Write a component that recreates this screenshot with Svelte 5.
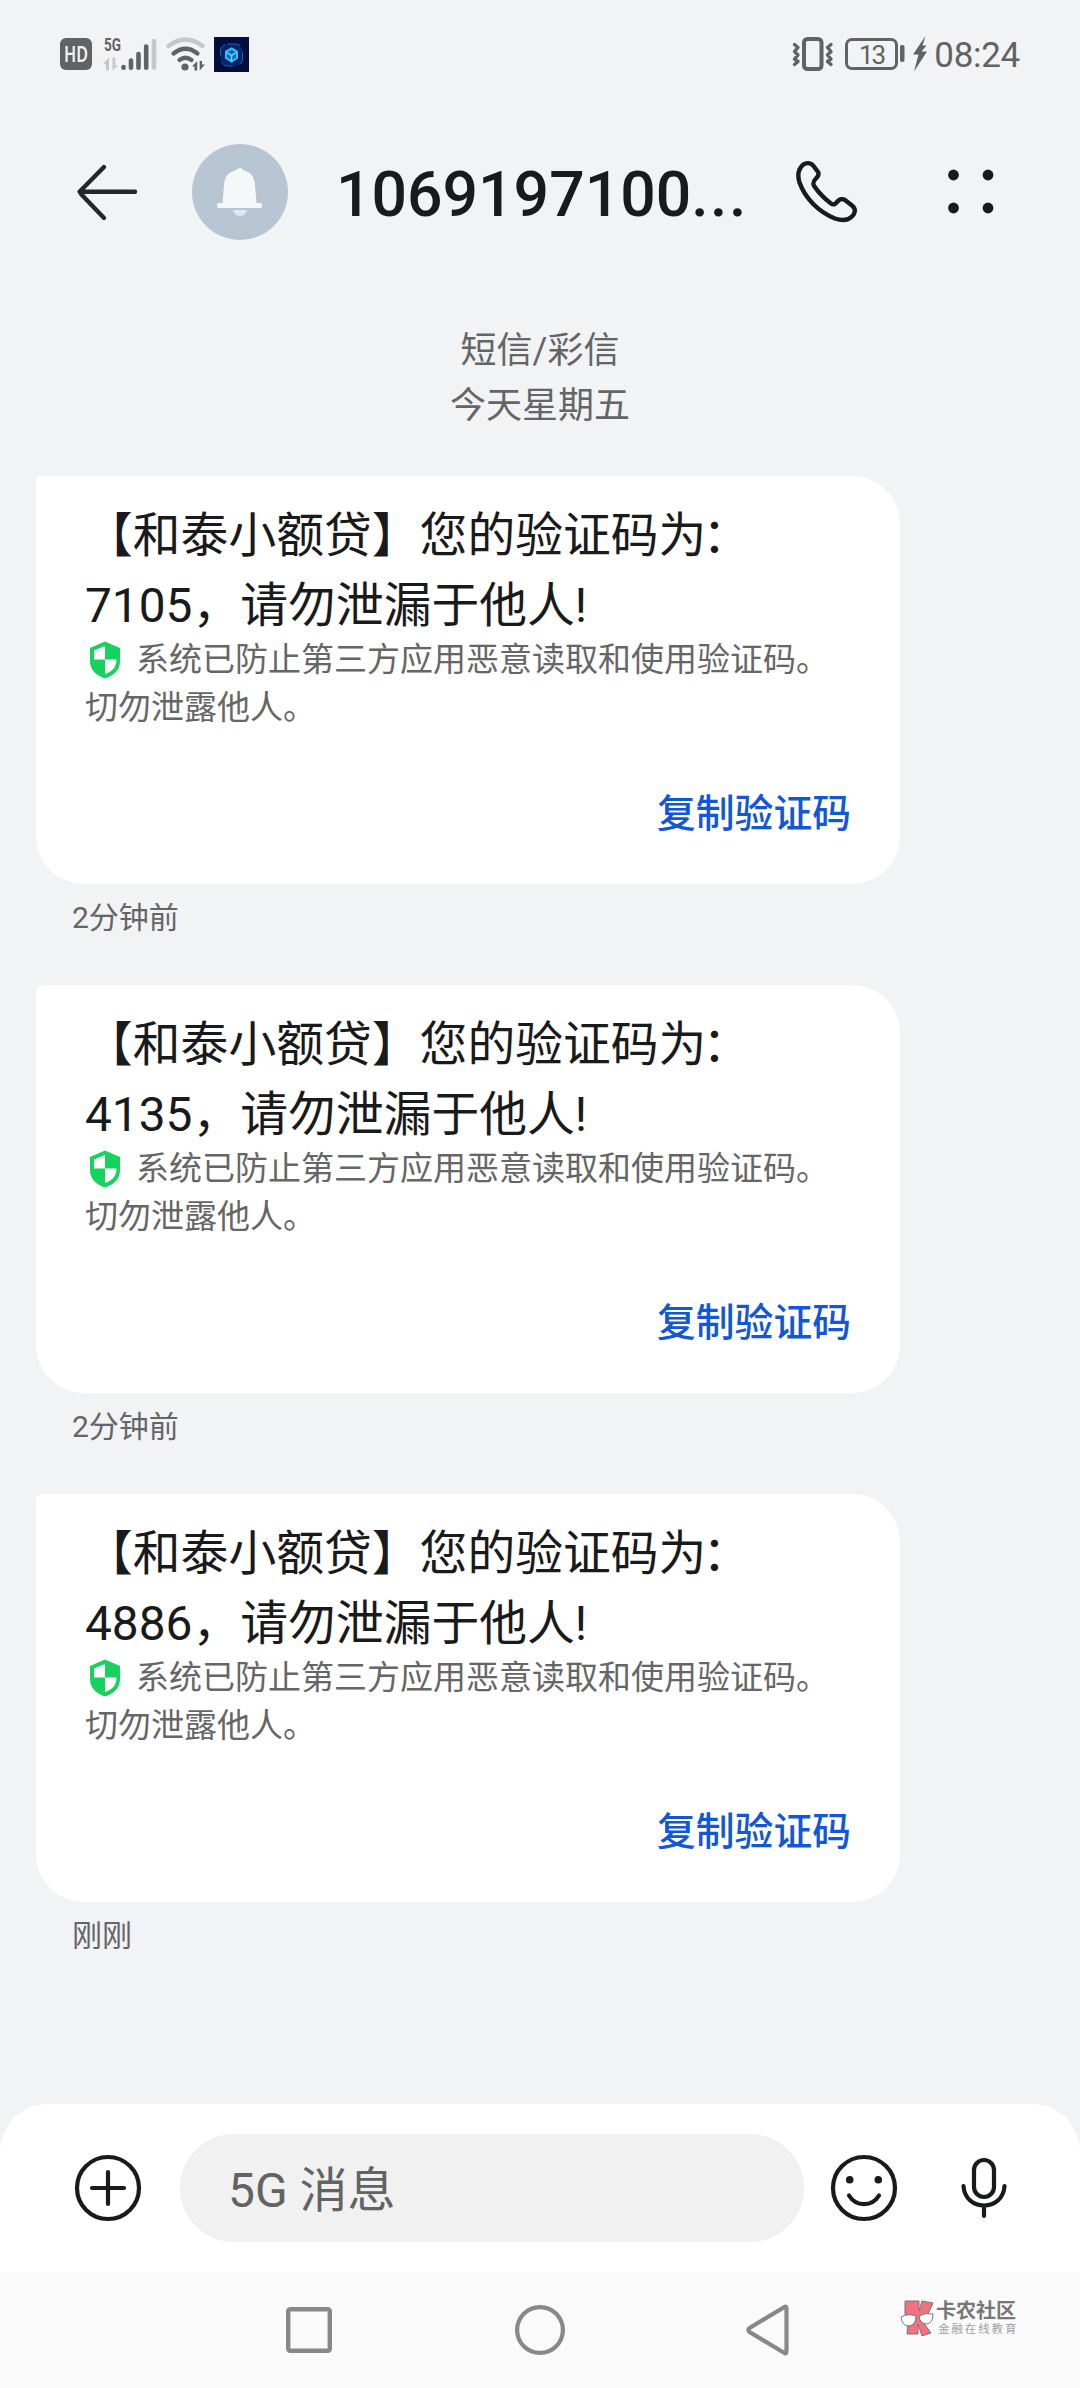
<script>
  const messages = [
    { code: '7105', time: '2分钟前' },
    { code: '4135', time: '2分钟前' },
    { code: '4886', time: '刚刚' },
  ];
</script>

<main class="screen">
  <div class="status">
    <svg class="hd" width="32" height="32" viewBox="0 0 32 32">
      <rect width="32" height="32" rx="6" fill="#616264" />
      <text x="4" y="23.5" textLength="24" lengthAdjust="spacingAndGlyphs" class="hd-text">HD</text>
    </svg>
    <svg class="signal" width="54" height="46" viewBox="0 -5 54 46">
      <text x="1" y="15" textLength="17" lengthAdjust="spacingAndGlyphs" class="net">5G</text>
      <path d="M0 28 6 21.500V34.500H3V28ZM9.500 21.500V34.500L15 29H12.200V21.500Z" fill="#c6c7c9" />
      <g stroke="#616264" stroke-width="4.600" stroke-linecap="round">
        <path d="M20.500 31V31.700M28 24.500V31.700M35.500 18V31.700M43.200 10.500V31.700" />
        <path d="M51 5V31.700" stroke="#c6c7c9" />
      </g>
    </svg>
    <svg class="wifi" width="40" height="36" viewBox="0 0 40 36">
      <g fill="none" stroke-width="4.200" stroke-linecap="round">
        <path d="M2.500 10Q19.500-3 36.500 10" stroke="#c6c7c9" />
        <path d="M7.500 17.500Q19.500 8 31.500 17.500M13.500 24Q19.500 19.500 25.500 24" stroke="#616264" />
      </g>
      <circle cx="19" cy="31" r="3.600" fill="#616264" />
      <path d="M26 30.500 31.200 25V34.500H28.500V30.500ZM33.700 25V34.500L39 28.500H36V25Z" fill="#616264" />
    </svg>
    <svg class="app" width="35" height="35" viewBox="0 0 35 35">
      <rect width="35" height="35" fill="#040d3c" />
      <rect x="6.500" y="7" width="22" height="22" rx="7" fill="#06246a" stroke="#1567a5" stroke-dasharray="13 7" />
      <path d="M17.500 11.500 23 14.500V21L17.500 24.500 12 21V14.500Z" fill="#0b65c8" stroke="#36bdf2" stroke-width="2" />
      <path d="m13 15.500 4.500 3 4.500-3M17.500 18.500V24" fill="none" stroke="#63e3fb" stroke-width="1.500" />
    </svg>
    <div class="grow"></div>
    <svg class="vibrate" width="42" height="34" viewBox="0 0 42 34">
      <rect x="12" y="2" width="17.500" height="30" rx="3.500" fill="none" stroke="#616264" stroke-width="4" />
      <path d="m2.500 7.500 3.500 3-3.500 4L6 18l-3.500 4L6 24.500l-3.500 3M39 7.500l-3.500 3 3.500 4-3.500 3.500 3.500 4-3.500 2.500 3.500 3" fill="none" stroke="#616264" stroke-width="3.400" stroke-linejoin="round" stroke-linecap="round" />
    </svg>
    <svg class="battery" width="60" height="32" viewBox="0 0 60 32">
      <rect x="1.500" y="1.500" width="50" height="29" rx="5.500" fill="none" stroke="#616264" stroke-width="3" />
      <rect x="55" y="7" width="4.500" height="17" rx="2" fill="#616264" />
      <text x="14" y="25.500" textLength="27" class="level">13</text>
    </svg>
    <svg class="bolt" width="14" height="36" viewBox="0 0 14 36">
      <path d="M12.500 0 0 18.500H5.500L1 35.500 14 15.500H8.500L13.500 9.500H9.500Z" fill="#616264" />
    </svg>
    <span class="clock">08:24</span>
  </div>

  <header>
    <svg class="back" width="64" height="60" viewBox="0 0 64 60" fill="none" stroke="#252627" stroke-width="4.400" stroke-linecap="round" stroke-linejoin="round">
      <path d="M28 5 3.500 29.800H59M5 32 28 56" />
    </svg>
    <div class="avatar">
      <svg width="96" height="96" viewBox="0 0 96 96">
        <path d="M48 24C50 24 51 26 53.500 27C60 29 62.500 34 63 41L64.500 59H68.500Q70 59 70 60.500V62.500Q70 64 68.500 64H26.500Q25 64 25 62.500V60.500Q25 59 26.500 59H30.500L32 41C32.500 34 35 29 42 27C44.500 26 46 24 48 24Z" fill="#f5f7f9" />
        <path d="M41 66H55Q53 72 48 72T41 66Z" fill="#dce8f4" />
      </svg>
    </div>
    <h1>1069197100<span class="dots">...</span></h1>
    <svg class="phone" width="64" height="64" viewBox="0 0 64 64">
      <path d="M6 7C9.500 2 15.500 2 18.500 6L23 12C24.500 14.500 23 16.500 21 18.500C18 21.500 17.500 23.500 19.500 26.500C24 33 30 39 36 43.500C38.500 45.500 40 44.500 42.500 41.500C44.500 39 47.500 38.500 50 40L57 45.500C61.500 49 60 53.500 57 56.500C53 60.500 47 61 40 58.500C23 51.500 10 38 4.500 22.500C2.500 16 3 11 6 7Z" fill="none" stroke="#191a1b" stroke-width="4.400" stroke-linejoin="round" />
    </svg>
    <svg class="more" width="48" height="48" viewBox="0 0 48 48" fill="#191a1b">
      <circle cx="6.500" cy="7" r="5.400" /><circle cx="41" cy="7" r="5.400" />
      <circle cx="6.500" cy="40" r="5.400" /><circle cx="41" cy="40" r="5.400" />
    </svg>
  </header>

  <section class="thread">
    <div class="intro">
      <div>短信/彩信</div>
      <div>今天星期五</div>
    </div>
    {#each messages as message}
      <article>
        <div class="card">
          <p class="body">【和泰小额贷】您的验证码为<span class="colon">：</span><br />{message.code}，请勿泄漏于他人!</p>
          <div class="notice">
            <div class="notice-line">
              <svg class="shield" width="32" height="38" viewBox="0 0 32 38">
                <path d="M16 .500 31 7V20C31 29 25 34.500 16 37.500C7 34.500 1 29 1 20V7Z" fill="#15d35c" />
                <path d="M16 5V18.500H5V9.500ZM16 18.500H27.500C27.500 26 23.500 30.500 16 33Z" fill="#fff" />
              </svg>
              <span>系统已防止第三方应用恶意读取和使用验证码。</span>
            </div>
            <div>切勿泄露他人。</div>
          </div>
          <div class="copy">复制验证码</div>
        </div>
        <div class="time">{message.time}</div>
      </article>
    {/each}
  </section>

  <footer class="composer">
    <svg class="plus" width="68" height="68" viewBox="0 0 68 68" fill="none" stroke="#191a1b" stroke-width="4.200" stroke-linecap="round">
      <circle cx="34" cy="34" r="31" />
      <path d="M18 34H50M34 18V50" />
    </svg>
    <div class="input">5G 消息</div>
    <svg class="smile" width="68" height="68" viewBox="0 0 68 68">
      <circle cx="34" cy="34" r="31" fill="none" stroke="#191a1b" stroke-width="4.200" />
      <circle cx="19.700" cy="25.700" r="3.800" fill="#191a1b" /><circle cx="48.300" cy="25.700" r="3.800" fill="#191a1b" />
      <path d="M19 41.500C26 53 42 53 49 41.500" fill="none" stroke="#191a1b" stroke-width="4.200" stroke-linecap="round" />
    </svg>
    <svg class="mic" width="48" height="62" viewBox="0 0 48 62" fill="none" stroke="#191a1b" stroke-width="4.200" stroke-linecap="round">
      <rect x="14" y="3" width="20" height="37" rx="10" />
      <path d="M3.500 29C5 55 43 55 44.500 29M24 50V59" />
    </svg>
  </footer>

  <nav>
    <svg class="recent" width="46" height="46" viewBox="0 0 46 46"><rect x="2.200" y="2.200" width="41.600" height="41.600" rx="2" fill="none" stroke="#888" stroke-width="4.400" /></svg>
    <svg class="home" width="50" height="50" viewBox="0 0 50 50"><circle cx="25" cy="25" r="22.900" fill="none" stroke="#888" stroke-width="4.200" /></svg>
    <svg class="prev" width="44" height="52" viewBox="0 0 44 52"><path d="M40.500 4.500V47.500Q40.500 50 38.500 49L3.500 28Q1.500 26 3.500 24L38.500 3Q40.500 2 40.500 4.500Z" fill="none" stroke="#888" stroke-width="4.200" stroke-linejoin="round" /></svg>
    <div class="brand">
      <svg width="34" height="36" viewBox="0 0 34 36" stroke="#777" stroke-width="1">
        <path d="M5 1H19V11L22 1 33 3 27 16 20 18 31 33 22 36 18 24V34H7L8 22 5 14Z" fill="#f47181" />
        <path d="M1 17Q8 13 16 16Q16 25 9 26Q2 26 1 17ZM19 16Q26 12 33 14Q33 23 27 24Q20 24 19 16Z" fill="#fff" />
      </svg>
      <div class="brand-text">
        <div class="brand-name">卡农社区</div>
        <div class="brand-sub">金融在线教育</div>
      </div>
    </div>
  </nav>
</main>

<style>
  :global(body) {
    margin: 0;
    background: #f1f3f5;
  }
  .screen {
    width: 1080px;
    height: 2388px;
    display: flex;
    flex-direction: column;
    overflow: hidden;
    background: #f1f3f5;
    color: #191a1b;
    font-family: Roboto, "Noto Sans CJK SC", sans-serif;
  }
  svg {
    display: block;
    flex: none;
  }
  .status {
    height: 108px;
    flex: none;
    box-sizing: border-box;
    padding: 0 60px 0 60px;
    display: flex;
    align-items: center;
    color: #616264;
  }
  .hd-text {
    font: 600 21px "Noto Sans", sans-serif;
    fill: #f1f3f5;
  }
  .net {
    font: 700 19px Roboto, sans-serif;
    fill: #616264;
  }
  .level {
    font: 400 26px Roboto, sans-serif;
    fill: #616264;
  }
  .signal {
    margin-left: 11px;
  }
  .wifi {
    margin-left: 9px;
  }
  .app {
    margin-left: 8px;
  }
  .grow {
    flex: 1;
  }
  .battery {
    margin-left: 11px;
  }
  .bolt {
    margin-left: 8px;
  }
  .clock {
    margin-left: 7px;
    font-size: 35px;
    line-height: 40px;
    font-weight: 400;
    padding-top: 4px;
    letter-spacing: -0.300px;
  }
  header {
    height: 168px;
    flex: none;
    display: flex;
    align-items: center;
    padding-left: 76px;
  }
  .avatar {
    width: 96px;
    height: 96px;
    border-radius: 50%;
    background: #b7c4d2;
    margin-left: 52px;
  }
  h1 {
    margin: 0 0 0 48px;
    width: 410px;
    font-size: 62.500px;
    line-height: 80px;
    font-weight: 500;
    white-space: nowrap;
    padding-top: 5px;
  }
  .dots {
    letter-spacing: 1.500px;
  }
  .phone {
    margin-left: 49px;
  }
  .more {
    margin-left: 88px;
    margin-top: -1px;
  }
  .intro {
    margin-top: 48px;
    height: 152px;
    text-align: center;
    font-size: 36px;
    line-height: 55px;
    color: #646566;
  }
  article {
    height: 509px;
    padding-left: 36px;
  }
  .card {
    width: 864px;
    height: 408px;
    box-sizing: border-box;
    padding: 25px 49px 0 49px;
    background: #fff;
    border-radius: 6px 48px 48px 48px;
  }
  .body {
    margin: 0;
    font-size: 47.800px;
    line-height: 70px;
    white-space: nowrap;
  }
  .colon {
    margin-left: -4px;
  }
  .notice {
    font-size: 33px;
    line-height: 48px;
    color: #666;
    margin-top: -5px;
  }
  .notice-line {
    display: flex;
    align-items: center;
    white-space: nowrap;
    padding-left: 4px;
  }
  .notice-line span {
    margin-left: 15px;
  }
  .copy {
    margin-top: 54px;
    text-align: right;
    font-size: 38.800px;
    line-height: 56px;
    font-weight: 500;
    color: #1257d6;
  }
  .time {
    margin-top: 13px;
    padding-left: 36px;
    font-size: 30px;
    line-height: 42px;
    color: #646566;
  }
  .composer {
    margin-top: auto;
    height: 168px;
    flex: none;
    background: #fff;
    border-radius: 48px 48px 0 0;
    display: flex;
    align-items: center;
    padding-left: 74px;
  }
  .input {
    width: 624px;
    height: 108px;
    box-sizing: border-box;
    margin-left: 38px;
    padding: 3px 0 0 48px;
    border-radius: 54px;
    background: #f1f1f1;
    color: #636363;
    font-size: 48px;
    line-height: 108px;
  }
  .smile {
    margin-left: 26px;
  }
  .mic {
    margin-left: 62px;
  }
  nav {
    height: 116px;
    flex: none;
    display: flex;
    align-items: center;
    padding-left: 286px;
    background: #fafafa;
  }
  .home {
    margin-left: 183px;
  }
  .prev {
    margin-left: 181px;
  }
  .brand {
    display: flex;
    margin: -24px 0 0 110px;
  }
  .brand-text {
    margin-left: 2px;
    white-space: nowrap;
  }
  .brand-name {
    font-size: 20px;
    line-height: 22px;
    font-weight: 700;
    color: #777;
  }
  .brand-sub {
    padding-left: 2px;
    font-size: 11.500px;
    line-height: 14px;
    letter-spacing: 1.900px;
    color: #a0a0a0;
  }
</style>
